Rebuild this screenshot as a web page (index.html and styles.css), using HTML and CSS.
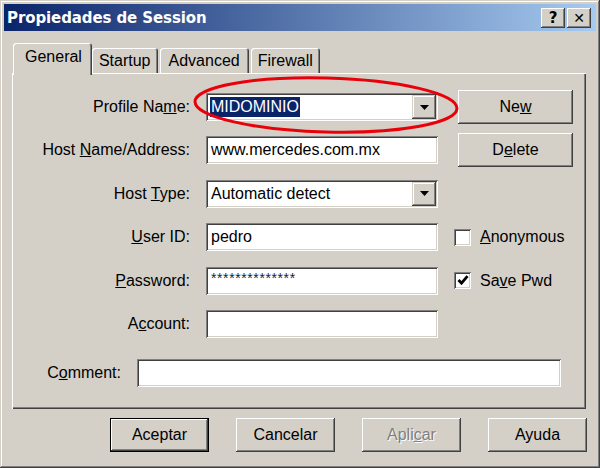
FILE: index.html
```html
<!DOCTYPE html>
<html>
<head>
<meta charset="utf-8">
<link rel="stylesheet" href="styles.css">
</head>
<body>
<div class="window">
  <div class="titlebar">
    <span class="title">Propiedades de Session</span>
    <div class="tbtns">
      <span class="tbtn">?</span>
      <span class="tbtn x">✕</span>
    </div>
  </div>
  <div class="content">
    <div class="tabs">
      <div class="tab active">General</div>
      <div class="tab">Startup</div>
      <div class="tab wide">Advanced</div>
      <div class="tab">Firewall</div>
    </div>
    <div class="panel">
      <div class="form">
        <div class="lbl">Profile Na<u>m</u>e:</div>
        <div class="field combo"><span class="sel">MIDOMINIO</span><span class="drop"><svg width="9" height="5" viewBox="0 0 9 5"><path d="M0 0h9L4.5 5z" fill="#000"/></svg></span></div>
        <div class="side"><button class="btn sidebtn">Ne<u>w</u></button></div>

        <div class="lbl">Host <u>N</u>ame/Address:</div>
        <div class="field"><span class="val">www.mercedes.com.mx</span></div>
        <div class="side"><button class="btn sidebtn">D<u>e</u>lete</button></div>

        <div class="lbl">Host <u>T</u>ype:</div>
        <div class="field combo"><span class="val">Automatic detect</span><span class="drop"><svg width="9" height="5" viewBox="0 0 9 5"><path d="M0 0h9L4.5 5z" fill="#000"/></svg></span></div>

        <div class="lbl"><u>U</u>ser ID:</div>
        <div class="field"><span class="val">pedro</span></div>
        <div class="side check"><span class="box"></span><span><u>A</u>nonymous</span></div>

        <div class="lbl"><u>P</u>assword:</div>
        <div class="field"><span class="pwd">**************</span></div>
        <div class="side check"><span class="box"><svg width="12" height="11" viewBox="0 0 12 11"><path d="M1.5 5l3 3.2 6-7" fill="none" stroke="#000" stroke-width="2.8"/></svg></span><span>Sa<u>v</u>e Pwd</span></div>

        <div class="lbl">A<u>c</u>count:</div>
        <div class="field"></div>
      </div>
      <div class="comment">
        <div class="clbl">C<u>o</u>mment:</div>
        <div class="field cfield"></div>
      </div>
    </div>
    <div class="footer">
      <button class="btn fbtn default">Aceptar</button>
      <button class="btn fbtn">Cancelar</button>
      <button class="btn fbtn disabled">Apli<u>c</u>ar</button>
      <button class="btn fbtn">Ayuda</button>
    </div>
  </div>
  <svg class="mark" width="600" height="468" viewBox="0 0 600 468">
    <ellipse cx="326" cy="105" rx="131" ry="27" fill="none" stroke="#e8000a" stroke-width="3" transform="rotate(1.5 326 105)"/>
  </svg>
</div>
</body>
</html>
```
FILE: styles.css
```css
html, body {
  margin: 0;
  padding: 0;
}
body {
  width: 600px;
  height: 468px;
  overflow: hidden;
  background: #d4d0c8;
  font-family: "Liberation Sans", Arial, sans-serif;
  font-size: 16px;
  color: #000;
}
.window {
  position: relative;
  width: 600px;
  height: 468px;
  box-sizing: border-box;
  padding: 4px;
  background: #d4d0c8;
  box-shadow: inset -1px -1px #404040, inset 1px 1px #d4d0c8, inset -2px -2px #808080, inset 2px 2px #fff;
}
.titlebar {
  height: 27px;
  display: flex;
  align-items: center;
  justify-content: space-between;
  padding: 0 5px 0 3px;
  background: linear-gradient(to right, #0a246a, #a6caf0);
}
.title {
  color: #fff;
  font-family: "DejaVu Sans", Verdana, sans-serif;
  font-weight: bold;
  font-size: 15px;
  letter-spacing: -0.1px;
}
.tbtns {
  display: flex;
  gap: 2px;
}
.tbtn {
  width: 24px;
  height: 20px;
  display: flex;
  align-items: center;
  justify-content: center;
  background: #d4d0c8;
  box-shadow: inset -1px -1px #404040, inset 1px 1px #fff, inset -2px -2px #808080;
  font-family: "DejaVu Sans", sans-serif;
  font-weight: bold;
  font-size: 15px;
  color: #000;
}
.tbtn.x {
  font-size: 14px;
}
.content {
  padding: 12px 10px 0 8px;
}
.tabs {
  display: flex;
  align-items: flex-end;
  height: 30px;
  padding-left: 3px;
}
.tab {
  height: 25px;
  box-sizing: border-box;
  padding: 3px 7px 0 7px;
  margin-right: 2px;
  border-radius: 3px 3px 0 0;
  background: #d4d0c8;
  box-shadow: inset 1px 1px #fff, inset -1px 0 #404040, inset -2px 0 #808080;
  line-height: 20px;
}
.tab.wide {
  padding: 3px 9px 0 9px;
}
.tab.active {
  position: relative;
  z-index: 1;
  height: 32px;
  margin: 0 0 -2px -2px;
  padding: 4px 10px 0 12px;
}
.panel {
  height: 336px;
  box-sizing: border-box;
  padding-top: 20px;
  box-shadow: inset 1px 1px #fff, inset -1px -1px #404040, inset -2px -2px #808080;
}
.form {
  display: grid;
  grid-template-columns: 178px 232px 120px;
  grid-auto-rows: 28px;
  column-gap: 16px;
  row-gap: 15.4px;
}
.lbl {
  grid-column: 1;
  text-align: right;
  line-height: 28px;
}
.field {
  display: flex;
  align-items: center;
  background: #fff;
  box-sizing: border-box;
  padding: 0 4px 0 5px;
  box-shadow: inset 1px 1px #808080, inset -1px -1px #fff, inset 2px 2px #404040, inset -2px -2px #d4d0c8;
}
.val {
  flex: 1;
}
.combo {
  padding-right: 2px;
  justify-content: space-between;
}
.combo .sel {
  background: #0a246a;
  color: #fff;
  padding: 0 1px;
  margin-left: -1px;
  line-height: 20px;
}
.drop {
  width: 24px;
  height: 24px;
  display: flex;
  align-items: center;
  justify-content: center;
  background: #d4d0c8;
  box-shadow: inset -1px -1px #404040, inset 1px 1px #d4d0c8, inset -2px -2px #808080, inset 2px 2px #fff;
}
.pwd {
  font-size: 14px;
  letter-spacing: 0.6px;
  padding-bottom: 6px;
  color: #222;
}
.side {
  display: flex;
  align-items: center;
}
.btn {
  font-family: "Liberation Sans", Arial, sans-serif;
  font-size: 16px;
  color: #000;
  background: #d4d0c8;
  border: 0;
  padding: 0;
  box-shadow: inset -1px -1px #404040, inset 1px 1px #fff, inset -2px -2px #808080, inset 2px 2px #d4d0c8;
}
.sidebtn {
  margin-left: 4px;
  width: 115px;
  height: 34px;
  flex: none;
}
.check {
  gap: 9px;
}
.box {
  width: 17px;
  height: 17px;
  box-sizing: border-box;
  background: #fff;
  display: flex;
  align-items: center;
  justify-content: center;
  box-shadow: inset 1px 1px #808080, inset -1px -1px #fff, inset 2px 2px #404040, inset -2px -2px #d4d0c8;
}
.comment {
  display: flex;
  margin-top: 21px;
  height: 28px;
  gap: 16px;
}
.clbl {
  width: 109px;
  text-align: right;
  line-height: 28px;
}
.cfield {
  width: 424px;
}
.footer {
  display: flex;
  justify-content: flex-end;
  gap: 27px;
  margin-top: 9px;
  margin-right: -1px;
}
.fbtn {
  width: 99px;
  height: 34px;
}
.fbtn.default {
  box-shadow: inset 0 0 0 1px #000, inset -2px -2px #404040, inset 2px 2px #fff, inset -3px -3px #808080;
}
.fbtn.disabled {
  color: #808080;
  text-shadow: 1px 1px #fff;
}
.mark {
  position: absolute;
  left: 0;
  top: 0;
  pointer-events: none;
}
```
